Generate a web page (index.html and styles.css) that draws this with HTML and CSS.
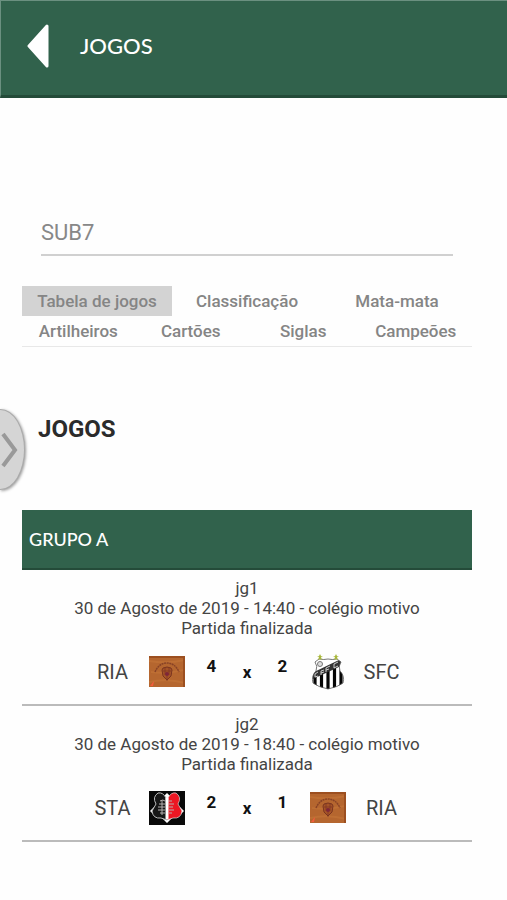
FILE: index.html
```html
<!DOCTYPE html>
<html lang="pt-BR">
<head>
    <meta charset="UTF-8">
    <meta name="viewport" content="width=device-width, initial-scale=1.0">
    <title>Jogos</title>
    <link rel="stylesheet" href="styles.css">
</head>
<body>
    <svg class="sprites" aria-hidden="true">
        <symbol id="escudo-ria" viewBox="0 0 36 30">
            <rect width="36" height="30" fill="#b5662f"/>
            <path d="M0 4q18 3 36-1M0 25q18-4 36 1M2 15q16 2 33-2" stroke="#c77839" stroke-width="2" fill="none" opacity=".5"/>
            <path d="M0 0h36M35 0v30" stroke="#9c4f20" stroke-width="2"/>
            <path d="M6 15Q10 6 18 6t12 9" stroke="#7d3a24" stroke-width="1.5" stroke-dasharray="2 .6" fill="none" opacity=".8"/>
            <path d="M14 11q4-2 8 0l1 2-1 6-4 4-4-4-1-6z" fill="#a65427" stroke="#74301f" stroke-width=".9"/>
            <path d="M14 14h8M16 11v7M20 11v7M18 19v5" stroke="#7d3424" stroke-width=".7" fill="none"/>
            <circle cx="18" cy="17" r="2" fill="#7e2638"/>
            <path d="M1 29l4-5-1 5z" fill="#f55b3d"/>
        </symbol>
        <symbol id="escudo-sfc" viewBox="0 0 36 36">
            <clipPath id="corte-sfc">
                <path d="M5 8l4-3q5 1 9 0 4 1 9 0l4 3q-3 4-1 9 5 5 3 12-5 4-15 6Q8 33 3 29 1 22 6 17q2-5-1-9z"/>
            </clipPath>
            <g clip-path="url(#corte-sfc)">
                <rect width="36" height="36" fill="#fff"/>
                <path d="M5 22v14M11.5 19v17M18 16v20M24.500 13v23M31 10v26" stroke="#050505" stroke-width="3.200"/>
                <path d="M2 19L31 5v7L3 25z" fill="#333"/>
                <path d="M8 18l-3 2v3l3-1M14 16l-3 1v4M11 19l3-1M20 12l-4 2v4M16 16l3-1M28 8l-4 2v4l4-2" stroke="#ddd" stroke-width=".9" fill="none"/>
            </g>
            <path d="M5 8l4-3q5 1 9 0 4 1 9 0l4 3q-3 4-1 9 5 5 3 12-5 4-15 6Q8 33 3 29 1 22 6 17q2-5-1-9z" fill="none" stroke="#555" stroke-width=".8"/>
            <circle cx="10" cy="10" r="2.500" fill="#ddd" stroke="#777"/>
            <path d="M10 0l1 2h2l-2 1 1 3-2-1-2 1 1-3-2-1h2zM26 0l1 2h2l-2 1 1 3-2-1-2 1 1-3-2-1h2z" fill="#a9b83c"/>
        </symbol>
        <symbol id="escudo-sta" viewBox="0 0 36 34">
            <rect width="36" height="34" fill="#090909"/>
            <path d="M18 2l4 4-4 3-4-3zM1 20l4-4v8zM35 20l-4-4v8zM12 26h12l-6 6z" fill="#fff"/>
            <path d="M17 7Q14 1 9 2 3 6 7 13L3 20q1 8 9 7l6 2z" fill="#171717" stroke="#bbb"/>
            <path d="M19 7q3-6 8-5 6 4 2 11l4 7q-1 8-9 7l-6 2z" fill="#ec1723" stroke="#ddd" stroke-width=".7"/>
            <path d="M16.500 7h3v21h-3z" fill="#fff"/>
            <path d="M11 10q3-2 5 0M10 13h6M9 16h7M9 19h7M11 22h5M13 9v15M20 10h3M20 13h5M20 16h4M20 19h5M20 22h3" stroke="#b5b0b0" fill="none"/>
        </symbol>
    </svg>

    <header class="topo">
        <button class="voltar" type="button" aria-label="Voltar">
            <svg viewBox="0 0 22 44" width="22" height="44">
                <path d="M20 2v40L2 22z" fill="#fff" stroke="#fff" stroke-width="3" stroke-linejoin="round"/>
            </svg>
        </button>
        <h1>JOGOS</h1>
    </header>

    <button class="menu-lateral" type="button" aria-label="Abrir menu">
        <svg viewBox="0 0 18 36" width="18" height="36">
            <path d="M3 2l12 16L3 34" fill="none" stroke="#999" stroke-width="4"/>
        </svg>
    </button>

    <main class="conteudo">
        <div class="filtro">
            <select aria-label="Categoria">
                <option>SUB7</option>
            </select>
        </div>

        <nav class="abas">
            <div class="linha-abas">
                <a href="#jogos" class="ativa">Tabela de jogos</a>
                <a href="#classificacao">Classificação</a>
                <a href="#mata-mata">Mata-mata</a>
            </div>
            <div class="linha-abas">
                <a href="#artilheiros">Artilheiros</a>
                <a href="#cartoes">Cartões</a>
                <a href="#siglas">Siglas</a>
                <a href="#campeoes">Campeões</a>
            </div>
        </nav>

        <h2 id="jogos">JOGOS</h2>

        <section class="grupo">
            <h3>GRUPO A</h3>

            <article class="jogo">
                <p>jg1</p>
                <p>30 de Agosto de 2019 - 14:40 - colégio motivo</p>
                <p>Partida finalizada</p>
                <div class="placar">
                    <span class="time">RIA</span>
                    <svg class="escudo"><use href="#escudo-ria"/></svg>
                    <b class="gols">4</b>
                    <b>x</b>
                    <b class="gols">2</b>
                    <svg class="escudo"><use href="#escudo-sfc"/></svg>
                    <span class="time">SFC</span>
                </div>
            </article>

            <article class="jogo">
                <p>jg2</p>
                <p>30 de Agosto de 2019 - 18:40 - colégio motivo</p>
                <p>Partida finalizada</p>
                <div class="placar">
                    <span class="time">STA</span>
                    <svg class="escudo"><use href="#escudo-sta"/></svg>
                    <b class="gols">2</b>
                    <b>x</b>
                    <b class="gols">1</b>
                    <svg class="escudo"><use href="#escudo-ria"/></svg>
                    <span class="time">RIA</span>
                </div>
            </article>
        </section>
    </main>
</body>
</html>
```

FILE: styles.css
```css
* {
    margin: 0;
    padding: 0;
    box-sizing: border-box;
}
body {
    background-color: #fefefe;
    color: #444;
    font-family: Roboto, sans-serif;
    font-size: 17px;
    line-height: 20px;
}
button {
    border: none;
    background: none;
    cursor: pointer;
}
svg {
    display: block;
}
.sprites {
    position: absolute;
    width: 0;
    height: 0;
}
.topo {
    display: flex;
    align-items: center;
    gap: 31px;
    height: 98px;
    padding: 0 26px 4px;
    background-color: #31624c;
    border-top: 1px solid #6b9080;
    border-left: 1px solid #6b9080;
    border-bottom: 3px solid #244b39;
}
.topo h1 {
    color: #fff;
    font-family: Lato, sans-serif;
    font-size: 22px;
    font-weight: 500;
}
/* aba presa na borda esquerda da tela */
.menu-lateral {
    position: absolute;
    top: 409px;
    left: 0;
    width: 25px;
    height: 81px;
    background-color: #d5d5d5;
    border: 1px solid #aaa;
    border-left: none;
    border-radius: 0 25px 25px 0 / 0 41px 41px 0;
    box-shadow: 1px 1px 3px #999;
}
.conteudo {
    padding: 112px 35px 40px 22px;
}
.filtro {
    padding: 0 19px;
}
.filtro select {
    width: 100%;
    height: 46px;
    appearance: none;
    border: none;
    border-bottom: 2px solid #d0d0d0;
    background: none;
    color: #888;
    font-family: inherit;
    font-size: 22px;
}
.abas {
    margin-top: 30px;
    border-bottom: 1px solid #e8e8e8;
}
.linha-abas {
    display: flex;
}
.linha-abas a {
    flex: 1 1 0;
    color: #858585;
    font-weight: 500;
    line-height: 30px;
    text-align: center;
    text-decoration: none;
}
.linha-abas .ativa {
    background-color: #d3d3d3;
}
h2 {
    margin: 67px 16px 66px;
    color: #2b2b2b;
    font-size: 24px;
    font-weight: 700;
    line-height: 30px;
}
.grupo h3 {
    padding: 0 7px;
    background-color: #31624c;
    border-bottom: 2px solid #244b39;
    color: #fff;
    font-family: Lato, sans-serif;
    font-size: 18px;
    font-weight: 500;
    line-height: 58px;
}
.jogo {
    padding: 8px 0 14px;
    border-bottom: 2px solid #bbb;
    text-align: center;
}
.placar {
    display: grid;
    grid-template-columns: 72px 36px 54px 17px 54px 36px 72px;
    align-items: center;
    justify-content: center;
    height: 36px;
    margin-top: 16px;
}
.placar b {
    color: #111;
}
.placar .gols {
    align-self: start;
    line-height: 24px;
}
.time {
    font-size: 20px;
}
.escudo {
    width: 36px;
    height: 36px;
}
```
